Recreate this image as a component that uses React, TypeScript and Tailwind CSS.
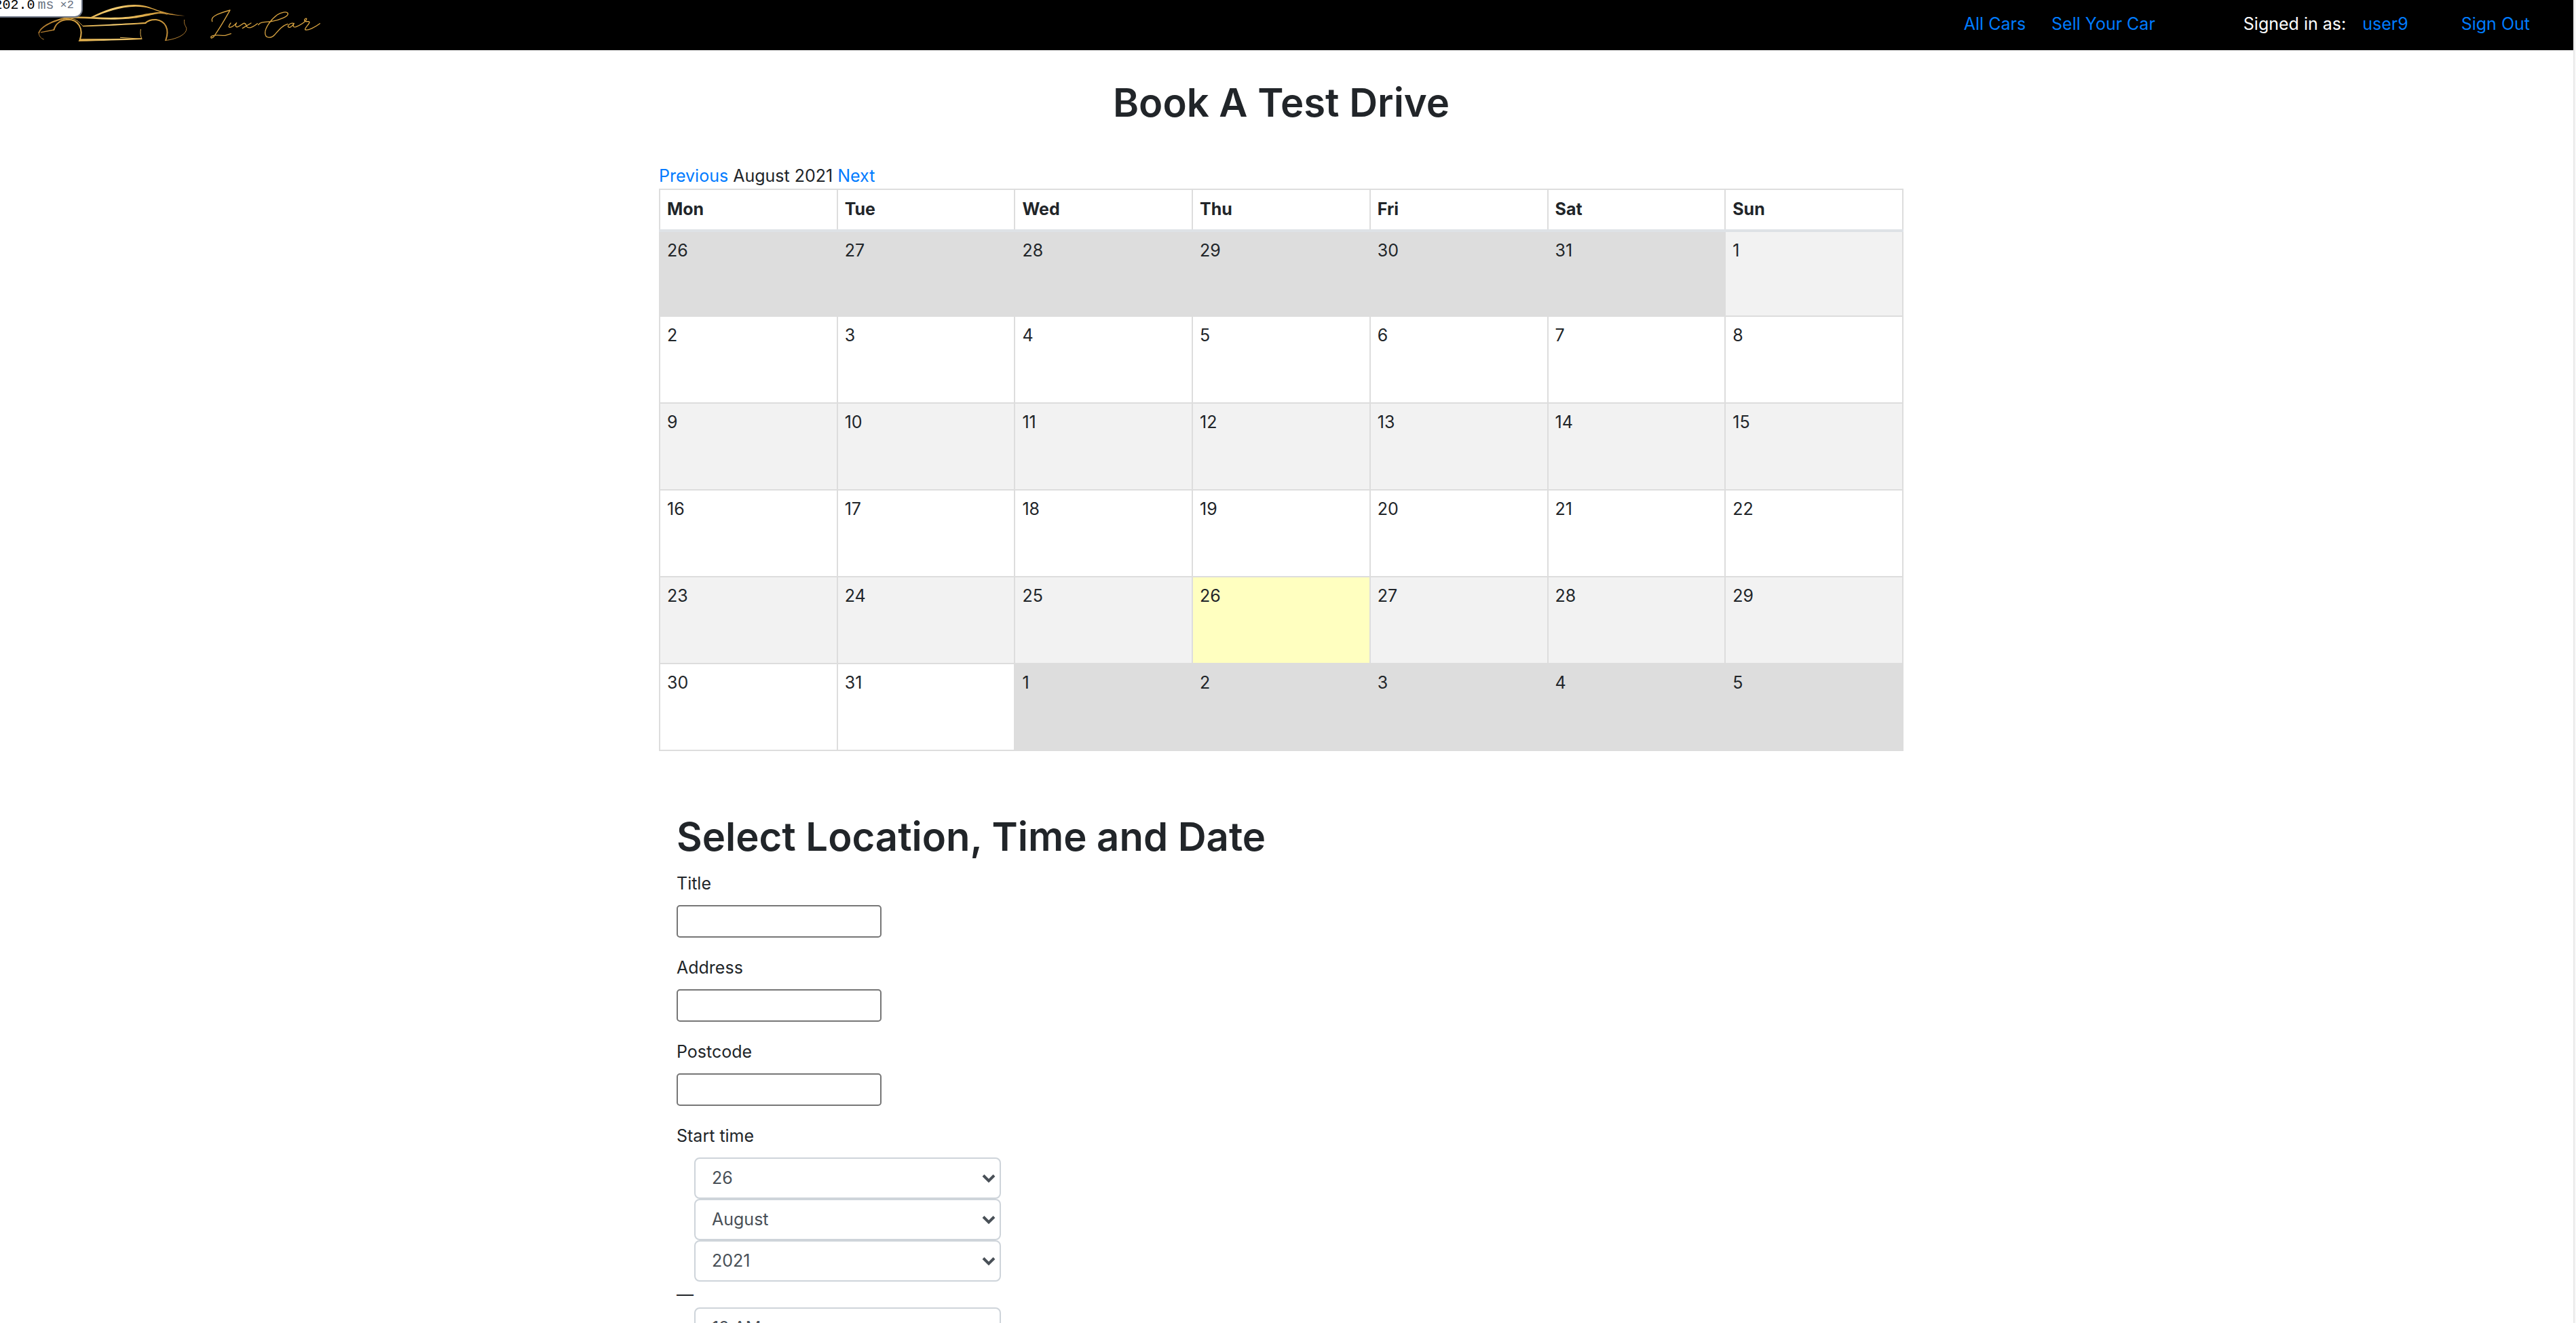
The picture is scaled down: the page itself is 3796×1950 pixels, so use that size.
const GOLD = "url(#gold)";

const WEEKDAYS = ["Mon", "Tue", "Wed", "Thu", "Fri", "Sat", "Sun"];

type Day = { day: number; outside?: boolean; today?: boolean };

const DAYS: Day[] = [
  ...[26, 27, 28, 29, 30, 31].map((day) => ({ day, outside: true })),
  ...Array.from({ length: 31 }, (_, i) => ({ day: i + 1, today: i + 1 === 26 })),
  ...[1, 2, 3, 4, 5].map((day) => ({ day, outside: true })),
];

const WEEKS = Array.from({ length: 6 }, (_, i) => DAYS.slice(i * 7, i * 7 + 7));

function dayColor(d: Day, week: number) {
  if (d.today) return "bg-[#ffffc0]";
  if (d.outside) return "bg-[#dddddd]";
  return week % 2 === 0 ? "bg-[#f2f2f2]" : "bg-white";
}

function Logo() {
  return (
    <svg viewBox="0 0 1500 222" className="h-[74px] w-[500px]" fill="none" strokeLinecap="round" strokeLinejoin="round" role="img" aria-label="Lux Car">
      <defs>
        <linearGradient id="gold" x1="168" y1="0" x2="828" y2="0" gradientUnits="userSpaceOnUse">
          <stop offset="0" stopColor="#a8742c" />
          <stop offset="0.25" stopColor="#d9a441" />
          <stop offset="0.5" stopColor="#f6cf74" />
          <stop offset="0.75" stopColor="#d9a441" />
          <stop offset="1" stopColor="#a8742c" />
        </linearGradient>
      </defs>
      <g fill={GOLD}>
        <path d="M402 75C455 48 520 22 592 21C650 20 672 38 705 47C745 60 785 66 818 70C780 70 745 65 715 56C680 42 650 29 600 29C530 30 465 54 412 77Z" />
        <path d="M170 148C172 120 225 92 280 79C340 68 420 78 490 78C590 78 630 62 670 58C710 50 730 56 742 67C725 58 700 58 675 65C630 74 590 86 490 86C420 86 340 76 285 84C230 97 180 122 175 146Z" />
        <path d="M365 113C440 110 560 104 640 99L648 105C570 110 450 115 368 118Z" />
        <path d="M346 183L356 172C440 172 540 173 624 169L628 174C540 178 450 180 346 183Z" />
      </g>
      <g stroke={GOLD}>
        <path d="M171 142C171 158 180 170 193 174" strokeWidth="3" />
        <path d="M182 143L238 132" strokeWidth="4" />
        <path d="M238 132C245 105 268 88 300 86C345 86 372 125 352 180" strokeWidth="6" />
        <path d="M240 130C246 102 275 80 310 81C342 84 352 102 367 116" strokeWidth="3" />
        <path d="M642 102C655 90 670 86 690 87C732 92 750 130 733 177" strokeWidth="6" />
        <path d="M730 179C790 172 828 148 824 124C820 112 812 108 815 88" strokeWidth="3" />
        <path d="M627 172C620 158 620 145 622 130M532 166L626 172" strokeWidth="3" />
      </g>
      <g stroke="#d9a441" strokeWidth="4">
        <path d="M938 95C930 75 955 62 1017 45C1000 75 975 120 950 155C942 170 930 172 933 162C945 150 975 158 995 157L1021 149" />
        <path d="M1020 102C1012 112 1008 122 1017 121C1030 119 1040 108 1046 101C1038 112 1042 121 1050 119C1062 115 1070 106 1077 103C1087 100 1088 112 1092 119C1100 128 1115 122 1138 104M1110 102L1072 125" />
        <path d="M1142 110C1150 95 1175 98 1200 95C1240 88 1275 72 1273 60C1270 48 1240 55 1225 66C1195 88 1172 125 1172 145C1172 172 1200 170 1215 153C1235 130 1250 112 1272 106" />
        <path d="M1297 103C1280 100 1265 118 1278 121C1288 122 1295 110 1300 103C1292 116 1298 122 1308 119C1325 112 1345 100 1354 88C1360 76 1344 82 1346 92C1350 100 1368 90 1368 99C1366 108 1346 124 1349 131C1360 138 1395 118 1414 104" />
      </g>
    </svg>
  );
}

const link = "text-[#007bff] hover:underline";

function Header() {
  return (
    <header className="relative flex h-[74px] items-center justify-between bg-black pr-16">
      <a href="#home">
        <Logo />
      </a>
      <nav className="flex items-center pb-1 leading-[38px]">
        <a href="#cars" className={link}>All Cars</a>
        <a href="#sell" className={`${link} ml-[38px]`}>Sell Your Car</a>
        <span className="ml-[130px] text-white">Signed in as:</span>
        <a href="#user" className={`${link} ml-6`}>user9</a>
        <a href="#out" className={`${link} ml-[78px]`}>Sign Out</a>
      </nav>
      <div className="absolute top-0 left-0 flex h-[26px] w-[122px] items-center justify-end overflow-hidden rounded-br-xl border-r-2 border-b-2 border-gray-500 bg-white pr-[11px] pb-2 font-['Liberation_Mono',monospace] text-[20px] leading-4 whitespace-nowrap text-gray-500">
        <span className="text-black">202.0</span>
        <span className="ml-1">ms</span>
        <span className="ml-[9px] text-[17px]">×2</span>
      </div>
    </header>
  );
}

function Calendar() {
  return (
    <section>
      <div className="leading-[38px]">
        <a href="#previous" className={link}>Previous</a> <time>August 2021</time>{" "}
        <a href="#next" className={link}>Next</a>
      </div>
      <table className="w-full table-fixed border-collapse border-2 border-[#dddddd]">
        <thead>
          <tr className="h-[61px]">
            {WEEKDAYS.map((d) => (
              <th key={d} scope="col" className="border-2 border-[#dddddd] border-b-4 border-b-[#dee2e6] px-[10px] text-left font-bold">
                {d}
              </th>
            ))}
          </tr>
        </thead>
        <tbody>
          {WEEKS.map((week, w) => (
            <tr key={w} className="h-32 first:h-[126px]">
              {week.map((d, i) => (
                <td key={i} className={`border-2 border-[#dddddd] px-[10px] py-2 align-top leading-[38px] ${dayColor(d, w)}`}>
                  {d.day}
                </td>
              ))}
            </tr>
          ))}
        </tbody>
      </table>
    </section>
  );
}

function TextField({ id, label }: { id: string; label: string }) {
  return (
    <div className="mb-[25px] flex flex-col items-start">
      <label htmlFor={id} className="mb-[13px] leading-[38px]">{label}</label>
      <input id={id} type="text" className="h-12 w-[302px] rounded-[5px] border-2 border-[#767676] bg-white px-1" />
    </div>
  );
}

function SelectField({ id, label, value }: { id: string; label: string; value: string }) {
  return (
    <div className="relative ml-[26px] w-[452px]">
      <select
        id={id}
        aria-label={label}
        defaultValue={value}
        className="block h-[61px] w-full appearance-none rounded-lg border-2 border-[#ced4da] bg-white px-6 text-[#495057]"
      >
        <option>{value}</option>
      </select>
      <svg viewBox="0 0 20 14" className="pointer-events-none absolute top-6 right-2 h-[14px] w-5" fill="none" stroke="#495057" strokeWidth="4">
        <path d="M2 2.500L10 10.500L18 2.500" />
      </svg>
    </div>
  );
}

function BookingForm() {
  return (
    <form className="mt-[88px] px-[26px]">
      <h1 className="mb-[11px] text-[58px] leading-[77px] font-semibold">Select Location, Time and Date</h1>
      <TextField id="title" label="Title" />
      <TextField id="address" label="Address" />
      <TextField id="postcode" label="Postcode" />
      <fieldset>
        <legend className="mb-[13px] leading-[38px]">Start time</legend>
        <SelectField id="day" label="Day" value="26" />
        <SelectField id="month" label="Month" value="August" />
        <SelectField id="year" label="Year" value="2021" />
        <div className="leading-[38px]">—</div>
        <SelectField id="hour" label="Hour" value="12 AM" />
      </fieldset>
    </form>
  );
}

export default function App() {
  return (
    <div className="h-screen overflow-hidden bg-[#f8f8f8] pr-0.5 font-['Inter',sans-serif] text-[25px] text-[#212529]">
      <div className="min-h-full border-r-2 border-[#e8e8e8] bg-white">
        <Header />
        <div className="pr-4">
          <main className="mx-auto w-[1834px] max-w-full">
            <h1 className="mt-[39px] text-center text-[58px] leading-[77px] font-semibold">Book A Test Drive</h1>
            <div className="mt-[50px]">
              <Calendar />
            </div>
            <BookingForm />
          </main>
        </div>
      </div>
    </div>
  );
}
